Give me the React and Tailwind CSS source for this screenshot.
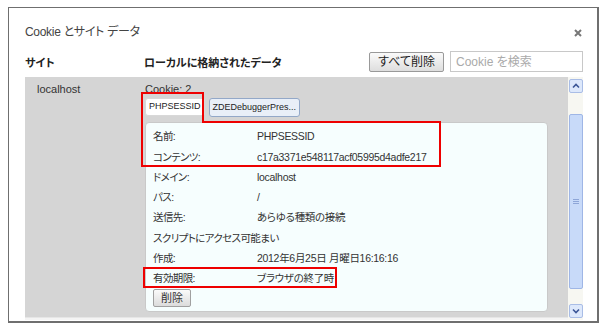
import React from 'react';

const font = "font-['Liberation_Sans','Noto_Sans_CJK_JP',sans-serif] [font-feature-settings:'palt']";

const details = [
  ['名前:', 'PHPSESSID'],
  ['コンテンツ:', 'c17a3371e548117acf05995d4adfe217'],
  ['ドメイン:', 'localhost'],
  ['パス:', '/'],
  ['送信先:', 'あらゆる種類の接続'],
  ['スクリプトにアクセス可能まい', ''],
  ['作成:', '2012年6月25日 月曜日16:16:16'],
  ['有効期限:', 'ブラウザの終了時'],
];

const Scrollbar = () => (
  <div className="w-[15px] h-full bg-[#f7f7f2] flex flex-col items-center pt-[2px] pb-[2px]">
    <div className="w-[14px] h-[14px] rounded-[2px] border border-[#a9bde6] bg-[#dde8fb] flex items-center justify-center">
      <svg width="8" height="6" viewBox="0 0 8 6"><path d="M1 4.5 L4 1.5 L7 4.5" fill="none" stroke="#3b5596" strokeWidth="1.6" /></svg>
    </div>
    <div className="h-[21px]" />
    <div className="w-[14px] h-[175px] rounded-[2px] border border-[#9fb6e6] bg-[#c8daf9] flex items-center justify-center">
      <div className="flex flex-col gap-[1px]">
        <div className="w-[6px] h-px bg-[#8ea6d8]" />
        <div className="w-[6px] h-px bg-[#8ea6d8]" />
        <div className="w-[6px] h-px bg-[#8ea6d8]" />
      </div>
    </div>
    <div className="flex-1" />
    <div className="w-[14px] h-[14px] rounded-[2px] border border-[#a9bde6] bg-[#dde8fb] flex items-center justify-center">
      <svg width="8" height="6" viewBox="0 0 8 6"><path d="M1 1.5 L4 4.5 L7 1.5" fill="none" stroke="#3b5596" strokeWidth="1.6" /></svg>
    </div>
  </div>
);

export default function App() {
  return (
    <div className={`relative w-[605px] h-[334px] bg-white overflow-hidden ${font}`}>
      <div className="ml-[8px] mt-[7px] w-[591px] h-[316px] border-l border-t border-r-2 border-b-2 border-[#6f6f6f] bg-white flex flex-col pl-[16px] pr-[14px]">
        <div className="h-[33px] flex items-end justify-between">
          <span className="text-[12px] tracking-[-0.3px] text-[#444] leading-[16px] mb-[1px]">Cookie とサイト データ</span>
          <svg className="mb-[4px] mr-[1px]" width="8" height="8" viewBox="0 0 8 8"><path d="M1 1 L7 7 M7 1 L1 7" stroke="#777" strokeWidth="2" /></svg>
        </div>
        <div className="h-[36px] flex items-end pb-[7px]">
          <span className="w-[119px] text-[11px] font-bold text-[#222] leading-[14px]">サイト</span>
          <span className="text-[11px] font-bold text-[#222] leading-[14px]">ローカルに格納されたデータ</span>
          <div className="flex-1" />
          <div className="flex items-center gap-[6px] mb-[-2px]">
            <button className="h-[20px] px-[8px] text-[12px] text-[#222] rounded-[2px] border border-[#999] bg-gradient-to-b from-[#fafafa] to-[#dedede] leading-[16px]">すべて削除</button>
            <div className="w-[133px] h-[21px] border border-[#c8c8c8] px-[5px] flex items-center text-[12px] text-[#aaa]">Cookie を検索</div>
          </div>
        </div>
        <div className="h-[243px] flex overflow-hidden">
          <div className="flex-1 flex flex-col">
            <div className="h-[240px] bg-[#d5d5d5] flex text-[11px] text-[#333]">
              <div className="w-[119px] pl-[12px] pt-[5px] leading-[14px]">localhost</div>
              <div className="flex-1 pt-[5px] pr-[20px]">
                <div className="leading-[14px] pl-[1px]">Cookie: 2</div>
                <div className="flex gap-[4px] mt-[2px] ml-[1px]">
                  <div className="h-[18px] px-[3px] flex items-center rounded-[3px] border border-[#d8d8d8] bg-white text-[9px] text-[#222]">PHPSESSID</div>
                  <div className="h-[19px] px-[3px] flex items-center rounded-[3px] border border-[#93a8c8] bg-[#e9eff8] text-[9px] text-[#222]">ZDEDebuggerPres...</div>
                </div>
                <div className="mt-[5px] ml-[1px] w-[403px] rounded-[4px] border border-[#c9c9c9] bg-[#f6fefe] pt-[4px] pb-[4px] pl-[7px]">
                  {details.map(([k, v]) => (
                    <div key={k} className="h-[20.3px] flex items-center text-[10.5px] text-[#333]">
                      <span className="w-[104px] whitespace-nowrap tracking-[-0.6px]">{k}</span>
                      <span className="whitespace-nowrap tracking-[-0.3px]">{v}</span>
                    </div>
                  ))}
                  <button className="h-[18px] px-[7px] text-[11px] text-[#333] rounded-[2px] border border-[#a0a0a0] bg-gradient-to-b from-[#fafafa] to-[#dcdcdc] leading-[14px]">削除</button>
                </div>
              </div>
            </div>
            <div className="flex-1 bg-[#f4f4f4] border-t border-[#e6e6e6]" />
          </div>
          <Scrollbar />
        </div>
      </div>
      <svg className="absolute left-0 top-0 pointer-events-none" width="605" height="334">
        <polygon points="142,93 203,93 203,122 440,122 440,166 142,166" fill="none" stroke="#ee0000" strokeWidth="2" />
        <rect x="144" y="268" width="192" height="19" fill="none" stroke="#ee0000" strokeWidth="2" />
      </svg>
    </div>
  );
}
